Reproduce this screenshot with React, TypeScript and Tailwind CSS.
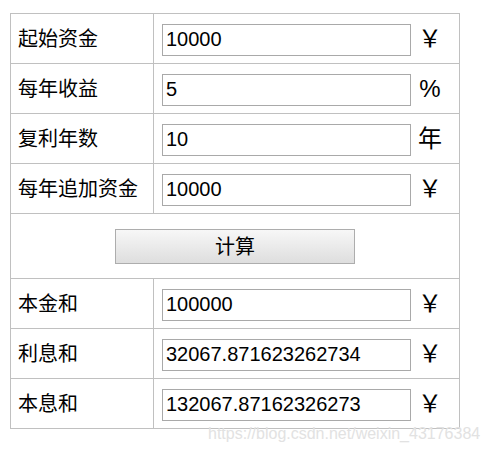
import React from "react";

const font = { fontFamily: '"Liberation Sans", "Noto Sans CJK SC", sans-serif' };

function Row({ label, value, unit }: { label: string; value: string; unit: string }) {
  return (
    <>
      <div className="h-[50px] border-r border-b border-[#c0c0c0] pl-[7px] flex items-center text-[20px] text-black">
        {label}
      </div>
      <div className="h-[50px] border-r border-b border-[#c0c0c0] pl-[8px] flex items-center">
        <input
          readOnly
          value={value}
          className="w-[249px] h-[32px] mt-[2px] border border-[#a9a9a9] bg-white px-[3px] text-[20px] text-black outline-none"
          style={font}
        />
        <span className="ml-[7px] w-[24px] text-[24px] leading-none text-black text-center">
          {unit}
        </span>
      </div>
    </>
  );
}

export default function App() {
  return (
    <div className="relative w-[489px] h-[451px] bg-white" style={font}>
      <div className="absolute left-0 top-0 pt-[13px] pl-[10px]"></div>
      <div className="pt-[13px] pl-[10px]">
        <div className="grid grid-cols-[143px_306px] w-[450px] border-l border-t border-[#c0c0c0]">
          <Row label="起始资金" value="10000" unit="￥" />
          <Row label="每年收益" value="5" unit="%" />
          <Row label="复利年数" value="10" unit="年" />
          <Row label="每年追加资金" value="10000" unit="￥" />
          <div className="col-span-2 h-[65px] border-r border-b border-[#c0c0c0] flex items-center justify-center">
            <button className="w-[240px] h-[35px] mt-[1px] border border-[#adadad] bg-gradient-to-b from-[#f7f7f7] to-[#dedede] text-[20px] text-black leading-none">
              计算
            </button>
          </div>
          <Row label="本金和" value="100000" unit="￥" />
          <Row label="利息和" value="32067.871623262734" unit="￥" />
          <Row label="本息和" value="132067.87162326273" unit="￥" />
        </div>
      </div>
      <div className="absolute left-[208px] top-[426px] text-[16px] leading-none text-[#e2e2e2] whitespace-nowrap">
        https://blog.csdn.net/weixin_43176384
      </div>
    </div>
  );
}
